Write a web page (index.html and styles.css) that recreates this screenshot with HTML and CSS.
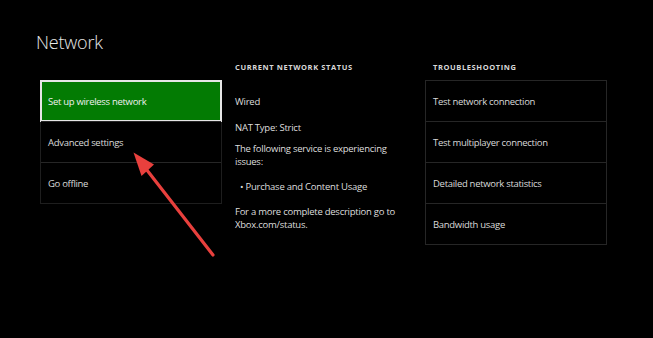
FILE: index.html
```html
<!DOCTYPE html>
<html>
<head>
<meta charset="utf-8">
<link rel="stylesheet" href="styles.css">
</head>
<body>
<div class="screen">
  <h1 class="title">Network</h1>
  <div class="columns">
    <div class="col col-menu">
      <ul class="list">
        <li class="item item-active">Set up wireless network</li>
        <li class="item">Advanced settings</li>
        <li class="item">Go offline</li>
      </ul>
    </div>
    <div class="col col-status">
      <h2 class="heading">CURRENT NETWORK STATUS</h2>
      <p class="line line-wired">Wired</p>
      <p class="line line-nat">NAT Type: Strict</p>
      <p class="line line-para">The following service is experiencing issues:</p>
      <p class="line line-bullet">• Purchase and Content Usage</p>
      <p class="line line-para2">For a more complete description go to Xbox.com/status.</p>
    </div>
    <div class="col col-trouble">
      <h2 class="heading">TROUBLESHOOTING</h2>
      <ul class="list">
        <li class="item">Test network connection</li>
        <li class="item">Test multiplayer connection</li>
        <li class="item">Detailed network statistics</li>
        <li class="item">Bandwidth usage</li>
      </ul>
    </div>
  </div>
  <svg class="arrow" width="653" height="338" viewBox="0 0 653 338">
    <line x1="213" y1="255" x2="143" y2="165" stroke="#e8403d" stroke-width="3.2" stroke-linecap="round"/>
    <polygon points="133.5,152.5 141.5,176 154,164.5" fill="#e8403d"/>
  </svg>
</div>
</body>
</html>
```
FILE: styles.css
```css
html, body {
  margin: 0;
  padding: 0;
  background: #000;
}
body {
  font-family: "Open Sans", "Noto Sans", sans-serif;
  color: #e4e4e4;
}
.screen {
  position: relative;
  width: 653px;
  height: 338px;
  box-sizing: border-box;
  padding: 30px 0 0 36px;
}
.title {
  margin: 0;
  font-size: 18px;
  font-weight: 300;
  line-height: 24px;
  color: #e8e8e8;
  letter-spacing: -0.2px;
}
.columns {
  display: grid;
  grid-template-columns: 182px 177px 182px;
  column-gap: 13px;
  margin: 6px 0 0 4px;
}
.col {
  display: flex;
  flex-direction: column;
}
.col-menu {
  padding-top: 20px;
}
.heading {
  margin: 0 0 6px 0;
  height: 14px;
  font-size: 7.5px;
  line-height: 14px;
  font-weight: 700;
  letter-spacing: 0.6px;
  color: #d8d8d8;
}
.col-trouble .heading {
  padding-left: 8px;
}
.list {
  list-style: none;
  margin: 0;
  padding: 0;
  border: 1px solid #262626;
}
.item {
  height: 41px;
  box-sizing: border-box;
  display: flex;
  align-items: center;
  padding-left: 7px;
  font-size: 9.5px;
  letter-spacing: -0.3px;
  color: #dadada;
  border-top: 1px solid #262626;
}
.item:first-child {
  border-top: none;
  height: 40px;
}
.col-menu .list {
  border-color: #1e1e1e;
}
.item-active {
  background: #037b03;
  border: 2px solid #e6e6e6;
  margin: -1px;
  color: #f0f0f0;
  padding-left: 6px;
}
.item-active:first-child {
  height: 42px;
  border-top: 2px solid #e6e6e6;
}
.line {
  margin: 0;
  font-size: 9.5px;
  letter-spacing: -0.25px;
  line-height: 13px;
  color: #dedede;
}
.line-wired {
  margin-top: 15px;
}
.line-nat {
  margin-top: 13px;
}
.line-para {
  margin-top: 8px;
}
.line-bullet {
  margin-top: 12px;
  padding-left: 5px;
}
.line-para2 {
  margin-top: 12px;
}
.arrow {
  position: absolute;
  left: 0;
  top: 0;
  pointer-events: none;
}
```
